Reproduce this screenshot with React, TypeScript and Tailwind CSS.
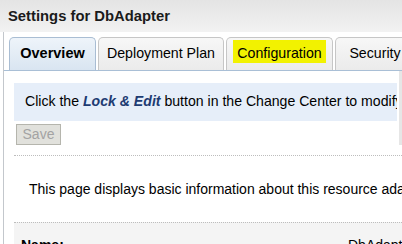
import type { FC } from 'react'

const tabs = [
  { label: 'Overview', width: 'w-[87px]', active: true },
  { label: 'Deployment Plan', width: 'w-[126px]' },
  { label: 'Configuration', width: 'w-[107px]', marked: true },
  { label: 'Security', width: 'w-[80px]' },
]

const Tab: FC<{ label: string; width: string; active?: boolean; marked?: boolean }> = ({ label, width, active, marked }) => (
  <div
    className={
      active
        ? `${width} shrink-0 h-[33px] flex items-center justify-center rounded-t-[5px] border border-b-0 border-[#a9bdd3] bg-gradient-to-b from-[#eef4fa] to-[#d9e5f1] font-bold text-[14.5px]`
        : `${width} shrink-0 h-[33px] flex items-center justify-center rounded-t-[5px] border border-b-0 border-[#c6c6c6] bg-gradient-to-b from-[#f7f7f7] to-[#ebebeb] text-[14.2px]`
    }
  >
    {marked ? (
      <span className="bg-[#f2f200] px-[4px] h-[23px] -mt-[6px] flex items-center pt-[5px]">{label}</span>
    ) : (
      <span className="whitespace-nowrap">{label}</span>
    )}
  </div>
)

export default function App() {
  return (
    <div className="w-[402px] h-[244px] overflow-hidden bg-white text-black font-['Liberation_Sans',Arial,sans-serif]">
      <div className="h-[32px] flex items-center pl-[8px] bg-gradient-to-b from-[#e4e4e4] to-[#f2f2f2] font-bold text-[14.8px] text-[#1a1a1a]">
        Settings for DbAdapter
      </div>

      <div className="ml-[3px] border-l border-[#c3c7cc]">
        <div className="flex gap-[2px] pt-[5px] pl-[5px] border-b border-[#a9bfd6] overflow-hidden">
          {tabs.map((t) => (
            <Tab key={t.label} {...t} />
          ))}
        </div>

        <div className="pl-[10px]">
          <div className="flex">
            <div className="flex-1 min-w-0">
              <div className="mt-[12px] h-[38px] bg-[#e6eef9] pl-[11px] flex items-center whitespace-nowrap overflow-hidden text-[14.1px]">
                Click the&nbsp;<span className="font-bold italic text-[#1d3b72]">Lock &amp; Edit</span>&nbsp;button in the Change Center to modify the settings on this page.
              </div>

              <button className="mt-[3px] ml-[2px] w-[45px] h-[21px] flex items-center justify-center bg-[#e1e1dc] border border-[#b5b5ad] text-[#a3a3a3] text-[14px]">
                Save
              </button>
            </div>
            <div className="w-[5px] shrink-0 flex">
              <div className="w-[2px] bg-white" />
              <div className="w-[3px] bg-[#e6e6e6]" />
            </div>
          </div>

          <div className="mt-[10px] border-t border-dotted border-[#bdbdbd]" />

          <div className="h-[66px] flex items-center pl-[15px] whitespace-nowrap overflow-hidden text-[14px]">
            This page displays basic information about this resource adapter.
          </div>

          <div className="border-t border-dotted border-[#bdbdbd] bg-[#f4f4f4] h-[40px] pt-[12px] flex justify-between whitespace-nowrap overflow-hidden text-[14px]">
            <span className="pl-[7px] font-bold">Name:</span>
            <span className="w-[54px] overflow-hidden">DbAdapter</span>
          </div>
        </div>
      </div>
    </div>
  )
}
